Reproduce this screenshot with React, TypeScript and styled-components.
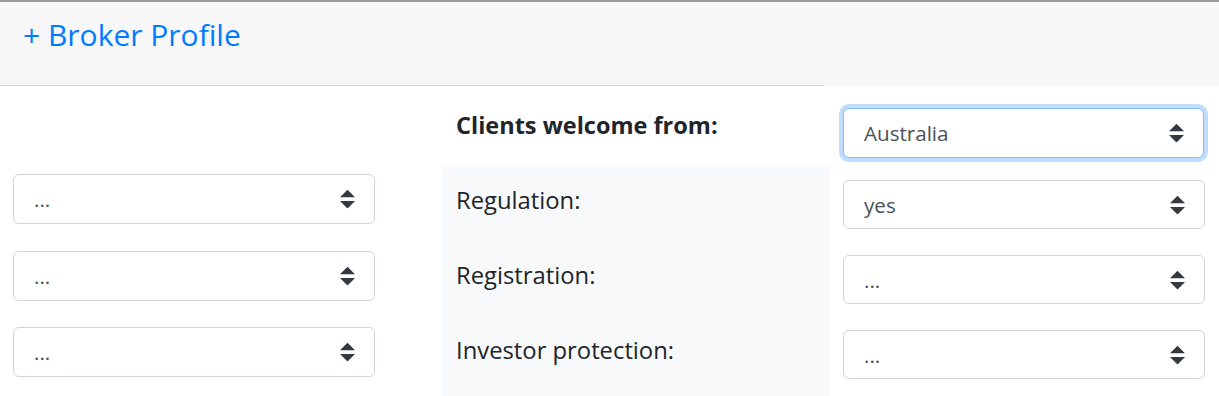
import React from "react";
import styled, { createGlobalStyle } from "styled-components";

const GlobalStyle = createGlobalStyle`
  html, body { margin: 0; padding: 0; background: #fff; }
  body { font-family: "Open Sans", "Noto Sans", Arial, sans-serif; color: #212529; }
  * { box-sizing: border-box; }
`;

const Page = styled.div`
  border-top: 2px solid #9c9c9c;
  width: 1219px;
  overflow: hidden;
`;

const Header = styled.header`
  display: flex;
  height: 84px;
  background: #f7f7f7;
`;

const HeaderMain = styled.div`
  flex: 0 0 824px;
  border-bottom: 1px solid #dcdcdc;
  padding: 15px 0 0 23px;
`;

const HeaderRest = styled.div`
  flex: 1;
`;

const Title = styled.a`
  display: inline-block;
  font-size: 30px;
  line-height: 1.2;
  color: #007bff;
  text-decoration: none;
  cursor: pointer;
`;

const Content = styled.div`
  display: flex;
  min-height: 310px;
`;

const LeftCol = styled.div`
  flex: 0 0 442px;
  display: flex;
  flex-direction: column;
  gap: 26.5px;
  padding: 88px 0 0 13px;
`;

const FormGrid = styled.div`
  flex: 1;
  display: grid;
  grid-template-columns: 388px 1fr;
  grid-template-rows: 81px 75px 75px 1fr;
`;

const LabelCell = styled.div<{ $heading?: boolean }>`
  background: ${(p) => (p.$heading ? "#fff" : "#f8f9fa")};
  padding: ${(p) => (p.$heading ? "21.5px 14px 0" : "15.5px 14px 0")};
  font-size: ${(p) => (p.$heading ? "23.5px" : "23.8px")};
  font-weight: ${(p) => (p.$heading ? 700 : 400)};
  line-height: 1.5;
  color: #212529;
  white-space: nowrap;
`;

const FieldCell = styled.div<{ $heading?: boolean }>`
  padding: ${(p) => (p.$heading ? "22px 15px 0 13px" : "13px 14px 0 13px")};
`;

const SelectWrap = styled.div<{ $width?: number }>`
  position: relative;
  width: ${(p) => (p.$width ? `${p.$width}px` : "362px")};
`;

const NativeSelect = styled.select<{ $focused?: boolean; $h?: number }>`
  appearance: none;
  -webkit-appearance: none;
  display: block;
  width: 100%;
  height: ${(p) => (p.$h ? `${p.$h}px` : "50px")};
  padding: 0 44px 0 20px;
  font-family: "Open Sans", "Noto Sans", Arial, sans-serif;
  font-size: 20.6px;
  color: #495057;
  background: #fff;
  border: 1px solid ${(p) => (p.$focused ? "#80bdff" : "#ced4da")};
  border-radius: 6px;
  box-shadow: ${(p) => (p.$focused ? "0 0 0 4px rgba(0, 123, 255, 0.25)" : "none")};
  outline: none;
`;

const Caret = styled.svg`
  position: absolute;
  right: 20px;
  top: 50%;
  width: 15px;
  height: 19px;
  transform: translateY(-50%);
  pointer-events: none;
`;

function Select({
  value,
  focused,
  width,
  height,
}: {
  value: string;
  focused?: boolean;
  width?: number;
  height?: number;
}) {
  return (
    <SelectWrap $width={width}>
      <NativeSelect $focused={focused} $h={height} defaultValue={value}>
        <option value={value}>{value}</option>
      </NativeSelect>
      <Caret viewBox="0 0 4 5" aria-hidden="true">
        <path d="M2 0L0 2h4zm0 5L0 3h4z" fill="#343a40" />
      </Caret>
    </SelectWrap>
  );
}

const rows = [
  { label: "Regulation:", value: "yes" },
  { label: "Registration:", value: "..." },
  { label: "Investor protection:", value: "..." },
];

export default function App() {
  return (
    <>
      <GlobalStyle />
      <Page>
        <Header>
          <HeaderMain>
            <Title>+ Broker Profile</Title>
          </HeaderMain>
          <HeaderRest />
        </Header>
        <Content>
          <LeftCol>
            <Select value="..." />
            <Select value="..." />
            <Select value="..." />
          </LeftCol>
          <FormGrid>
            <LabelCell $heading>Clients welcome from:</LabelCell>
            <FieldCell $heading>
              <Select value="Australia" focused width={361} />
            </FieldCell>
            {rows.map((r) => (
              <React.Fragment key={r.label}>
                <LabelCell>{r.label}</LabelCell>
                <FieldCell>
                  <Select value={r.value} height={49} />
                </FieldCell>
              </React.Fragment>
            ))}
          </FormGrid>
        </Content>
      </Page>
    </>
  );
}
